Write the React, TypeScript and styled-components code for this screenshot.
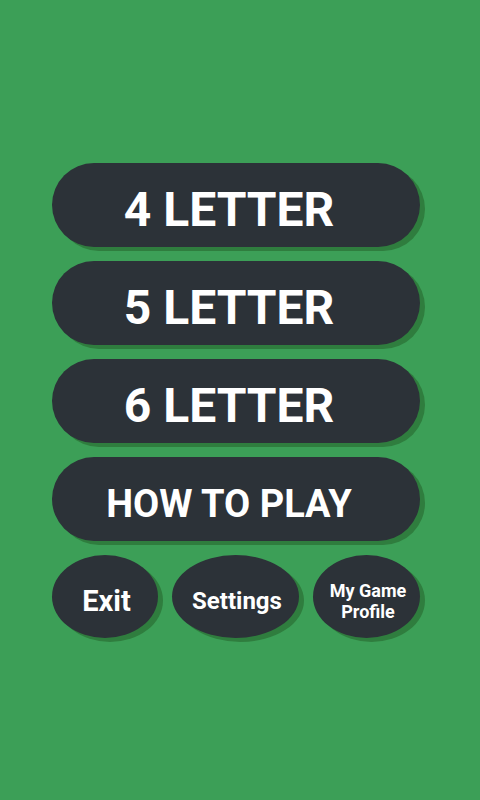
import { createGlobalStyle, styled } from "styled-components";

const GlobalStyle = createGlobalStyle`
  html, body {
    margin: 0;
    padding: 0;
    background: #3c9f57;
  }
  body {
    font-family: Roboto, "Noto Sans", "Liberation Sans", sans-serif;
  }
`;

const modes = ["4 LETTER", "5 LETTER", "6 LETTER"];

const App = () => {
  return (
    <Screen>
      <GlobalStyle />
      <Menu>
        {modes.map((mode) => (
          <BigButton key={mode} $size={48}>
            {mode}
          </BigButton>
        ))}
        <BigButton $size={38}>HOW TO PLAY</BigButton>
        <BottomRow>
          <SmallButton $width={106} $size={29}>
            Exit
          </SmallButton>
          <SmallButton $width={127} $size={24}>
            Settings
          </SmallButton>
          <SmallButton $width={107} $size={18}>
            My Game
            <br />
            Profile
          </SmallButton>
        </BottomRow>
      </Menu>
    </Screen>
  );
};

export default App;

const Screen = styled.div`
  height: 800px;
  display: flex;
  flex-direction: column;
  justify-content: center;
  padding-left: 52px;
  box-sizing: border-box;
  background: #3c9f57;
`;

const Menu = styled.div`
  width: 368px;
  display: flex;
  flex-direction: column;
  gap: 14px;
`;

const Pill = styled.button`
  border: none;
  background: #2c3238;
  color: #ffffff;
  font-family: Roboto, "Noto Sans", "Liberation Sans", sans-serif;
  font-weight: 700;
  box-shadow: 5px 4px 0 #2f7d3e;
  display: flex;
  align-items: center;
  justify-content: center;
  text-align: center;
  padding: 0;
  cursor: pointer;
`;

const BigButton = styled(Pill)<{ $size: number }>`
  width: 368px;
  height: 84px;
  border-radius: 42px;
  font-size: ${(p) => p.$size}px;
  padding: 10px 14px 0 0;
`;

const BottomRow = styled.div`
  display: flex;
  justify-content: space-between;
  gap: 14px;
`;

const SmallButton = styled(Pill)<{ $width: number; $size: number }>`
  width: ${(p) => p.$width}px;
  height: 83px;
  border-radius: 50%;
  font-size: ${(p) => p.$size}px;
  line-height: 1.15;
  padding: 12px 0 0 3px;
`;
